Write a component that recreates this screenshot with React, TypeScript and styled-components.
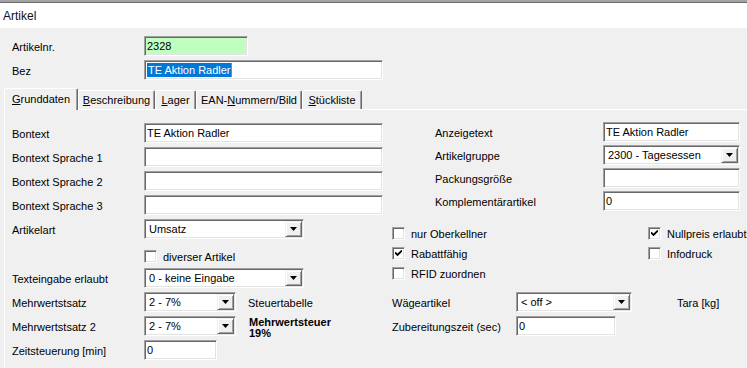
import React from "react";
import styled, { createGlobalStyle } from "styled-components";

const GlobalStyle = createGlobalStyle`
  html, body { margin: 0; padding: 0; background: #f0f0f0; overflow: hidden; }
  body { font-family: "Liberation Sans", Arial, sans-serif; font-size: 11px; color: #000; }
  * { box-sizing: border-box; }
`;

const Window = styled.div`
  width: 747px;
  height: 368px;
  display: flex;
  flex-direction: column;
  background: #f0f0f0;
  overflow: hidden;
`;

const TitleBar = styled.div`
  height: 28px;
  flex: none;
  border-top: 2px solid #a3a3a3;
  box-shadow: inset 0 1px 0 #6a6a6a;
  background: #fff;
  display: flex;
  align-items: center;
  padding: 1px 0 0 3px;
  font-size: 12px;
  color: #101020;
`;

const Header = styled.div`
  display: flex;
  flex-direction: column;
  gap: 4px;
  padding: 8px 0 0 12px;
`;

const Row = styled.div<{ $mt?: number }>`
  display: flex;
  align-items: center;
  height: 20px;
  margin-top: ${(p) => p.$mt ?? 0}px;
`;

const Label = styled.div<{ $w: number; $indent?: number }>`
  width: ${(p) => p.$w}px;
  flex: none;
  padding-left: ${(p) => p.$indent ?? 0}px;
  padding-top: 1px;
  white-space: nowrap;
`;

const Sunken = styled.div<{ $w: number; $bg?: string }>`
  width: ${(p) => p.$w}px;
  height: 20px;
  flex: none;
  background: ${(p) => p.$bg ?? "#fff"};
  border: 1px solid;
  border-color: #a0a0a0 #fff #fff #a0a0a0;
  box-shadow: inset 1px 1px 0 #696969, inset -1px -1px 0 #e3e3e3;
  display: flex;
  align-items: center;
  padding-left: 2px;
  white-space: nowrap;
  overflow: hidden;
`;

const Selected = styled.span`
  background: #0078d7;
  color: #fff;
  padding: 1px 0 1px 1px;
  border-right: 1px solid #e07020;
`;

const ComboBox = styled(Sunken)`
  padding: 1px 1px 1px 4px;
  justify-content: space-between;
`;

const ComboText = styled.span`
  flex: 1;
  overflow: hidden;
`;

const ComboButton = styled.div`
  width: 17px;
  height: 16px;
  flex: none;
  background: #f0f0f0;
  border: 1px solid;
  border-color: #f0f0f0 #696969 #696969 #f0f0f0;
  box-shadow: inset 1px 1px 0 #fff, inset -1px -1px 0 #a0a0a0;
  display: flex;
  align-items: center;
  justify-content: center;
`;

const TabStrip = styled.div`
  display: flex;
  align-items: flex-start;
  height: 22px;
  margin-top: 8px;
  margin-bottom: -1px;
  padding-left: 4px;
  position: relative;
  z-index: 1;
`;

const Tab = styled.div<{ $w: number; $active?: boolean }>`
  width: ${(p) => p.$w}px;
  height: ${(p) => (p.$active ? 22 : 19)}px;
  margin-top: ${(p) => (p.$active ? 0 : 2)}px;
  background: #f0f0f0;
  border-top: 1px solid #fff;
  border-left: 1px solid #fff;
  border-right: 1px solid #696969;
  box-shadow: inset -1px 0 0 #a0a0a0;
  border-radius: 2px 2px 0 0;
  display: flex;
  align-items: ${(p) => (p.$active ? "flex-start" : "center")};
  padding-top: ${(p) => (p.$active ? 4 : 0)}px;
  justify-content: center;
  white-space: nowrap;
  u { text-decoration: underline; text-underline-offset: 1px; }
`;

const Panel = styled.div`
  flex: 1;
  display: flex;
  align-items: flex-start;
  margin-left: 4px;
  border-top: 1px solid #fff;
  border-left: 1px solid #fff;
  padding: 0 0 0 7px;
`;

const LeftCol = styled.div`
  width: 371px;
  flex: none;
  display: flex;
  flex-direction: column;
  padding-top: 13px;
`;

const RightCol = styled.div`
  flex: 1;
  margin-left: 9px;
  display: flex;
  flex-direction: column;
  padding-top: 12px;
`;

const Stack = styled.div<{ $gap: number; $mt?: number }>`
  display: flex;
  flex-direction: column;
  gap: ${(p) => p.$gap}px;
  margin-top: ${(p) => p.$mt ?? 0}px;
`;

const CheckGrid = styled.div`
  display: grid;
  grid-template-columns: 256px auto;
  grid-auto-rows: 13px;
  row-gap: 7px;
  margin-top: 16px;
`;

const CheckItem = styled.label<{ $ml?: number }>`
  display: flex;
  align-items: center;
  gap: 6px;
  height: 13px;
  margin-left: ${(p) => p.$ml ?? 0}px;
  white-space: nowrap;
`;

const Box = styled.span`
  width: 13px;
  height: 13px;
  flex: none;
  background: #fff;
  border: 1px solid;
  border-color: #a0a0a0 #fff #fff #a0a0a0;
  box-shadow: inset 1px 1px 0 #696969, inset -1px -1px 0 #e3e3e3;
  display: flex;
  align-items: center;
  justify-content: center;
`;

const Side = styled.div<{ $ml: number }>`
  margin-left: ${(p) => p.$ml}px;
  padding-top: 1px;
  white-space: nowrap;
`;

const BoldNote = styled.div`
  margin-left: 13px;
  align-self: flex-start;
  font-weight: bold;
  line-height: 11px;
  white-space: nowrap;
  display: flex;
  flex-direction: column;
  padding-top: 1px;
`;

const Arrow = () => (
  <svg width="7" height="4" viewBox="0 0 7 4">
    <path d="M0 0H7L3.5 4Z" fill="#000" />
  </svg>
);

const Check = () => (
  <svg width="7" height="7" viewBox="0 0 7 7">
    <path d="M0 2.5L2.5 5L7 0.5" fill="none" stroke="#000" strokeWidth="1.8" />
  </svg>
);

const Combo: React.FC<{ w: number; value: string }> = ({ w, value }) => (
  <ComboBox $w={w}>
    <ComboText>{value}</ComboText>
    <ComboButton>
      <Arrow />
    </ComboButton>
  </ComboBox>
);

const CheckBox: React.FC<{ label: string; checked?: boolean; ml?: number }> = ({
  label,
  checked,
  ml,
}) => (
  <CheckItem $ml={ml}>
    <Box>{checked && <Check />}</Box>
    <span>{label}</span>
  </CheckItem>
);

export default function App() {
  return (
    <>
      <GlobalStyle />
      <Window>
        <TitleBar>Artikel</TitleBar>
        <Header>
          <Row>
            <Label $w={132}>Artikelnr.</Label>
            <Sunken $w={104} $bg="#c0ffc0">2328</Sunken>
          </Row>
          <Row>
            <Label $w={132}>Bez</Label>
            <Sunken $w={239}>
              <Selected>TE Aktion Radler</Selected>
            </Sunken>
          </Row>
        </Header>
        <TabStrip>
          <Tab $w={74} $active>
            <span>
              <u>G</u>runddaten
            </span>
          </Tab>
          <Tab $w={77}>
            <span>
              <u>B</u>eschreibung
            </span>
          </Tab>
          <Tab $w={41}>
            <span>
              <u>L</u>ager
            </span>
          </Tab>
          <Tab $w={106}>
            <span>
              EAN-<u>N</u>ummern/Bild
            </span>
          </Tab>
          <Tab $w={60}>
            <span>
              <u>S</u>tückliste
            </span>
          </Tab>
        </TabStrip>
        <Panel>
          <LeftCol>
            <Stack $gap={4}>
              <Row>
                <Label $w={132}>Bontext</Label>
                <Sunken $w={239}>TE Aktion Radler</Sunken>
              </Row>
              <Row>
                <Label $w={132}>Bontext Sprache 1</Label>
                <Sunken $w={239} />
              </Row>
              <Row>
                <Label $w={132}>Bontext Sprache 2</Label>
                <Sunken $w={239} />
              </Row>
              <Row>
                <Label $w={132}>Bontext Sprache 3</Label>
                <Sunken $w={239} />
              </Row>
              <Row>
                <Label $w={132}>Artikelart</Label>
                <Combo w={160} value="Umsatz" />
              </Row>
            </Stack>
            <Stack $gap={0} $mt={11}>
              <CheckBox label="diverser Artikel" ml={132} />
            </Stack>
            <Stack $gap={4} $mt={5}>
              <Row>
                <Label $w={132}>Texteingabe erlaubt</Label>
                <Combo w={160} value="0 - keine Eingabe" />
              </Row>
              <Row>
                <Label $w={132}>Mehrwertstsatz</Label>
                <Combo w={92} value="2 - 7%" />
                <Side $ml={12}>Steuertabelle</Side>
              </Row>
              <Row>
                <Label $w={132}>Mehrwertstsatz 2</Label>
                <Combo w={92} value="2 - 7%" />
                <BoldNote>
                  <span>Mehrwertsteuer</span>
                  <span>19%</span>
                </BoldNote>
              </Row>
              <Row>
                <Label $w={132}>Zeitsteuerung [min]</Label>
                <Sunken $w={73}>0</Sunken>
              </Row>
            </Stack>
          </LeftCol>
          <RightCol>
            <Stack $gap={3}>
              <Row>
                <Label $w={211} $indent={43}>
                  Anzeigetext
                </Label>
                <Sunken $w={137}>TE Aktion Radler</Sunken>
              </Row>
              <Row>
                <Label $w={211} $indent={43}>
                  Artikelgruppe
                </Label>
                <Combo w={137} value="2300 - Tagesessen" />
              </Row>
              <Row>
                <Label $w={211} $indent={43}>
                  Packungsgröße
                </Label>
                <Sunken $w={137} />
              </Row>
              <Row>
                <Label $w={211} $indent={43}>
                  Komplementärartikel
                </Label>
                <Sunken $w={137}>0</Sunken>
              </Row>
            </Stack>
            <CheckGrid>
              <CheckBox label="nur Oberkellner" />
              <CheckBox label="Nullpreis erlaubt" checked />
              <CheckBox label="Rabattfähig" checked />
              <CheckBox label="Infodruck" />
              <CheckBox label="RFID zuordnen" />
            </CheckGrid>
            <Stack $gap={4} $mt={12}>
              <Row>
                <Label $w={124}>Wägeartikel</Label>
                <Combo w={116} value="< off >" />
                <Side $ml={45}>Tara [kg]</Side>
              </Row>
              <Row>
                <Label $w={124}>Zubereitungszeit (sec)</Label>
                <Sunken $w={100}>0</Sunken>
              </Row>
            </Stack>
          </RightCol>
        </Panel>
      </Window>
    </>
  );
}
